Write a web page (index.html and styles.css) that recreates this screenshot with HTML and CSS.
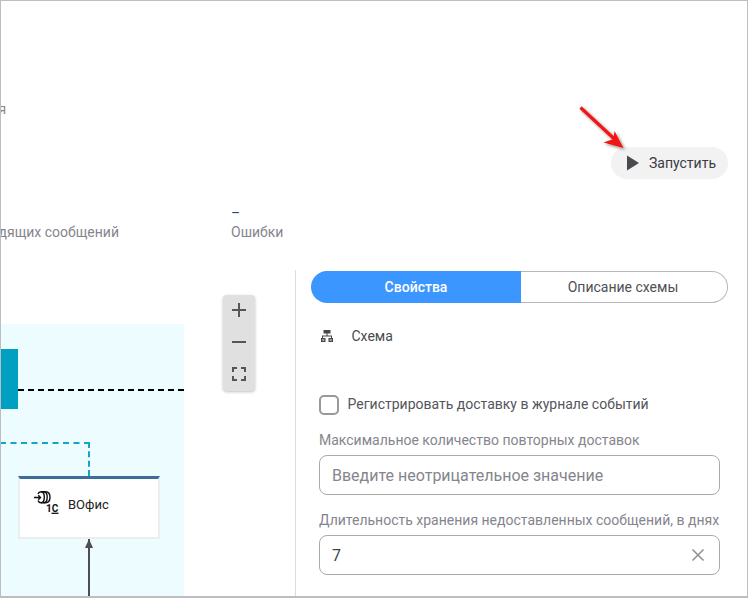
FILE: index.html
```html
<!DOCTYPE html>
<html lang="ru">
<head>
<meta charset="utf-8">
<title>Схема</title>
<link rel="stylesheet" href="styles.css">
</head>
<body>
<div class="frame">
  <header class="top">
    <div class="crumb"><span class="crumb-text">Конфигурация</span></div>
    <div class="actions">
      <button class="run" type="button">
        <svg class="run-icon" width="12" height="16" viewBox="0 0 12 16"><path d="M0 0.5 12 8 0 15.5Z" fill="#4a4a4e"/></svg>
        <span>Запустить</span>
      </button>
    </div>
    <div class="stats">
      <div class="stat stat-out"><span class="stat-value">&nbsp;</span><span class="stat-label">Исходящих сообщений</span></div>
      <div class="stat stat-err"><span class="stat-value">–</span><span class="stat-label">Ошибки</span></div>
    </div>
  </header>
  <main class="body">
    <section class="canvas">
      <div class="lane">
        <div class="block"></div>
        <div class="line-black"></div>
        <div class="line-teal-h"></div>
        <div class="line-teal-v"></div>
        <div class="node">
          <svg class="node-icon" width="25" height="23" viewBox="0 0 25 23" fill="none" stroke="#111" stroke-width="1.400">
            <path d="M0 6.500H6.500M4.300 4.300 6.500 6.500 4.300 8.700"/>
            <path d="M4 3C4.500 1.500 5.500 0.700 7 0.700H11.500C14.500 0.700 16 3 16 6.200S14.500 11.700 11.500 11.700H7C5.500 11.700 4.500 11 4 9.500"/>
            <path d="M7 0.700C9.200 0.700 10.300 3 10.300 6.200S9.200 11.700 7 11.700"/>
            <path d="M9.800 0.700C12 0.700 13.200 3 13.200 6.200S12 11.700 9.800 11.700"/>
            <text class="logo-1c" x="12" y="21">1С</text>
            <path d="M17.500 22.300H24.500" stroke-width="1.300"/>
          </svg>
          <span class="node-name">ВОфис</span>
        </div>
        <div class="arrow-up"></div>
      </div>
      <div class="zoom-panel">
        <svg width="16" height="16" viewBox="0 0 16 16"><path d="M8 1V15M1 8H15" stroke="#55555b" stroke-width="2"/></svg>
        <svg width="16" height="16" viewBox="0 0 16 16"><path d="M1 8H15" stroke="#55555b" stroke-width="2"/></svg>
        <svg width="16" height="16" viewBox="0 0 16 16" fill="none"><path d="M2 6V2H6M10 2H14V6M14 10V14H10M6 14H2V10" stroke="#55555b" stroke-width="2"/></svg>
      </div>
    </section>
    <section class="props">
      <div class="tabs">
        <div class="tab tab-active">Свойства</div>
        <div class="tab">Описание схемы</div>
      </div>
      <div class="schema">
        <svg width="12" height="12" viewBox="0 0 12 12"><path d="M2.500 0H9.500V3.500H6.500V5.500H11V8H12V12H7.500V8H10V6.500H2V8H4.500V12H0V8H1V5.500H5.500V3.500H2.500Z" fill="#47474c"/><path d="M1.200 9.500H3.300V10.500H1.200ZM8.700 9.500H10.800V10.500H8.700Z" fill="#fff"/></svg>
        <span>Схема</span>
      </div>
      <label class="check"><span class="box"></span><span class="check-text">Регистрировать доставку в журнале событий</span></label>
      <div class="field">
        <div class="field-label">Максимальное количество повторных доставок</div>
        <div class="input"><span class="placeholder">Введите неотрицательное значение</span></div>
      </div>
      <div class="field">
        <div class="field-label">Длительность хранения недоставленных сообщений, в днях</div>
        <div class="input"><span class="value">7</span>
          <svg width="14" height="14" viewBox="0 0 14 14"><path d="M1.500 1.500 12.500 12.500M12.500 1.500 1.500 12.500" stroke="#8f8f8f" stroke-width="1.500"/></svg>
        </div>
      </div>
    </section>
  </main>
  <svg class="pointer" width="60" height="60" viewBox="0 0 60 60">
    <defs><filter id="sh" x="-30%" y="-30%" width="170%" height="170%"><feDropShadow dx="1.500" dy="1.500" stdDeviation="1.500" flood-color="#000" flood-opacity=".45"/></filter></defs>
    <g filter="url(#sh)"><path d="M0.500 1.500 36 34.500" stroke="#f01414" stroke-width="3.200" fill="none"/><path d="M43.500 42 23.500 36.500 33.500 33 34.500 25Z" fill="#f01414"/></g>
  </svg>
</div>
</body>
</html>
```

FILE: styles.css
```css
* { box-sizing: border-box; }
html, body { margin: 0; padding: 0; }
body { font-family: Roboto, "Liberation Sans", sans-serif; font-size: 14px; background: #fff; }
.frame {
  position: relative;
  width: 748px;
  height: 598px;
  border: 1px solid #bdbdbd;
  border-width: 1px 1px 2px 1px;
  overflow: hidden;
  display: flex;
  flex-direction: column;
  background: #fff;
}
.top { height: 269px; flex: none; display: flex; flex-direction: column; }
.crumb { height: 146px; padding-top: 100px; flex: none; }
.crumb-text { display: block; margin-left: -90px; line-height: 17px; color: #8a8a90; font-size: 14px; white-space: nowrap; }
.actions { display: flex; justify-content: flex-end; padding-right: 19px; flex: none; }
.run {
  display: flex;
  align-items: center;
  width: 117px;
  height: 32px;
  padding: 0 0 0 16px;
  border: 0;
  border-radius: 16px;
  background: #f2f2f2;
  color: #3a3b44;
  font: 14px Roboto, sans-serif;
}
.run-icon { margin-right: 10px; flex: none; }
.stats { display: flex; margin-top: 24px; }
.stat { display: flex; flex-direction: column; white-space: nowrap; color: #85858d; }
.stat-value { line-height: 20px; height: 19px; color: #2d4a78; font-size: 14px; }
.stat-label { line-height: 20px; }
.stat-out { width: 230px; align-items: flex-end; padding-right: 112px; }
.body { flex: 1; display: flex; min-height: 0; }
.canvas { position: relative; width: 295px; flex: none; border-right: 1px solid #dcdcdc; }
.lane { position: absolute; left: -1px; top: 54px; width: 184px; height: 276px; background: #ecfcff; }
.block { position: absolute; left: 0; top: 25px; width: 18px; height: 60px; background: #00a0c2; }
.line-black { position: absolute; left: 18px; right: 0; top: 65px; border-top: 2px dashed #000; }
.line-teal-h { position: absolute; left: 0; width: 90px; top: 118px; border-top: 2px dashed #12a5c6; }
.line-teal-v { position: absolute; left: 88px; top: 118px; height: 34px; border-left: 2px dashed #12a5c6; }
.node {
  position: absolute;
  left: 18px;
  top: 152px;
  width: 142px;
  height: 63px;
  background: #fff;
  border: 2px solid #e9eeee;
  border-top: 3px solid #3b6f98;
  display: flex;
  align-items: flex-start;
  padding: 12px 0 0 14px;
}
.node-icon { flex: none; margin-right: 9px; overflow: visible; }
.logo-1c { font: 700 10px Roboto, sans-serif; fill: #111; stroke: none; }
.node-name { font-size: 13px; line-height: 20px; margin-top: 4px; color: #222; }
.arrow-up { position: absolute; left: 88px; top: 215px; bottom: 0; width: 2px; background: #4d4d53; }
.arrow-up::before {
  content: "";
  position: absolute;
  left: -3px;
  top: 0;
  border-left: 4px solid transparent;
  border-right: 4px solid transparent;
  border-bottom: 9px solid #4d4d53;
}
.zoom-panel {
  position: absolute;
  left: 222px;
  top: 25px;
  width: 32px;
  height: 96px;
  background: #e0e0e0;
  border-radius: 4px;
  box-shadow: 0 1px 3px rgba(0,0,0,.25);
  display: flex;
  flex-direction: column;
  align-items: center;
  gap: 16px;
  padding-top: 7px;
}
.props { flex: 1; padding: 1px 19px 0 15px; color: #4a4a50; }
.tabs { display: flex; height: 32px; }
.tab {
  flex: none;
  width: 207px;
  display: flex;
  align-items: center;
  justify-content: center;
  padding-right: 2px;
  border: 1px solid #b8b8b8;
  border-left: 0;
  border-radius: 0 16px 16px 0;
  color: #4f4f55;
}
.tab-active {
  width: 210px;
  padding-right: 0;
  background: #3b97ff;
  border: 0;
  border-radius: 16px 0 0 16px;
  color: #fff;
  font-weight: 500;
}
.schema { display: flex; align-items: center; height: 20px; margin: 23px 0 0 10px; }
.schema svg { flex: none; margin-right: 18.500px; }
.check { display: flex; align-items: center; margin: 49px 0 0 8px; height: 20px; color: #55555c; }
.check-text { padding-bottom: 2px; }
.box { width: 20px; height: 20px; border: 2px solid #999; border-radius: 5px; margin-right: 8.500px; flex: none; }
.field { margin: 0 0 0 8px; }
.field-label { height: 20px; line-height: 20px; margin: 15px 0 5px; color: #85858d; white-space: nowrap; }
.input {
  height: 40px;
  width: 401px;
  border: 1px solid #aaa;
  border-radius: 8px;
  display: flex;
  align-items: center;
  justify-content: space-between;
  padding: 0 14px 0 12px;
  font-size: 16px;
}
.placeholder { color: #85858d; }
.value { color: #444; }
.pointer { position: absolute; left: 579px; top: 105px; overflow: visible; }
```
